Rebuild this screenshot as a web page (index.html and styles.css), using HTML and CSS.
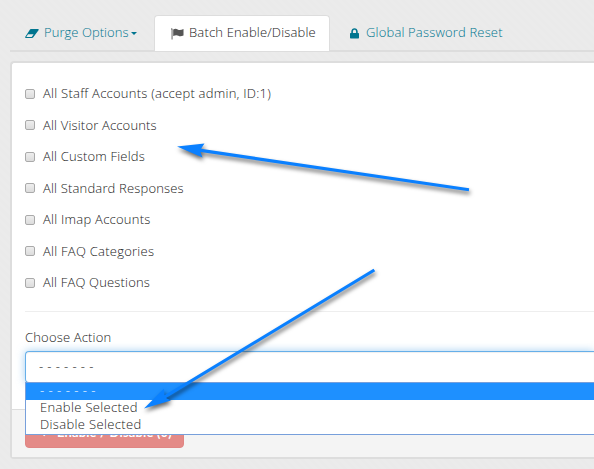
FILE: index.html
```html
<!DOCTYPE html>
<html lang="en">
<head>
<meta charset="utf-8">
<title>Batch Enable/Disable</title>
<link rel="stylesheet" href="styles.css">
</head>
<body>
<nav class="tabs">
  <a class="tab purge"><svg class="icon" width="14" height="9" viewBox="0 0 14 9"><path fill-rule="evenodd" d="M5.800 0H13q1 .1.7 1L8.300 8.200Q7.800 9 7 9H.8Q-.2 8.800.3 7.700L5 .6Q5.300 0 5.800 0ZM3 5.200 1.300 8H6.700L8.600 5.200Z"/></svg><span>Purge Options</span><i class="caret"></i></a>
  <a class="tab active"><svg class="icon" width="13" height="12" viewBox="0 0 13 12"><path d="M0 .8Q.7-.3 1.500.8V11.500H.600V1.800Q0 1.500 0 .8ZM2.200 1.500Q4.500.200 6.700 1.400T12.500 1V7.500Q9.500 9 7.400 7.800T2.200 8.100Z"/></svg><span>Batch Enable/Disable</span></a>
  <a class="tab global"><svg class="icon" width="9" height="11" viewBox="0 0 9 11"><path fill-rule="evenodd" d="M1.300 5V3.600C1.300-1 7.700-1 7.700 3.600V5H8.300Q9 5 9 5.700V9.800Q9 10.500 8.300 10.500H.7Q0 10.500 0 9.800V5.700Q0 5 .7 5ZM2.900 5H6.100V3.600C6.100 1.100 2.900 1.100 2.900 3.600Z"/></svg><span>Global Password Reset</span></a>
</nav>
<main class="panel">
  <div class="panel-body">
    <label class="row wide"><i class="box"></i><span>All Staff Accounts (accept admin, ID:1)</span></label>
    <label class="row"><i class="box"></i><span>All Visitor Accounts</span></label>
    <label class="row"><i class="box"></i><span>All Custom Fields</span></label>
    <label class="row"><i class="box"></i><span>All Standard Responses</span></label>
    <label class="row wide"><i class="box"></i><span>All Imap Accounts</span></label>
    <label class="row wide"><i class="box"></i><span>All FAQ Categories</span></label>
    <label class="row"><i class="box"></i><span>All FAQ Questions</span></label>
    <hr>
    <div class="caption">Choose Action</div>
    <div class="select">- - - - - - -
      <div class="menu">
        <div class="option chosen">- - - - - - -</div>
        <div class="option">Enable Selected</div>
        <div class="option">Disable Selected</div>
      </div>
    </div>
  </div>
  <div class="panel-footer">
    <button class="submit"><svg class="icon" width="11" height="10" viewBox="0 0 11 10"><path d="M0 5 1.800 3.200 4.200 5.600 9.200.6 11 2.400 4.200 9.200Z"/></svg><span>Enable / Disable (0)</span></button>
  </div>
</main>
<svg class="arrows" width="594" height="469" viewBox="0 0 594 469">
  <path d="M177 146.500 204.500 143.500 201 148.800 469.200 188.200 468.800 191.200 200.500 152 202.500 157.500Z"/>
  <path d="M144 408.500 164 388.500 164.500 395.300 373.500 268.800 375.200 271.300 166 398 171 400.500Z"/>
</svg>
</body>
</html>
```
FILE: styles.css
```css
* { box-sizing: border-box; }
body {
  margin: 0;
  width: 594px;
  height: 469px;
  overflow: hidden;
  padding: 15px 0 0 10px;
  background: repeating-linear-gradient(45deg, #ebebeb 0 3px, #eaeaea 3px 6px);
  font: 13px/18px "Open Sans", "Liberation Sans", sans-serif;
  font-weight: 300;
  letter-spacing: .17px;
  color: #222;
}
.icon { fill: currentColor; flex: none; }
.tabs {
  display: flex;
  height: 37px;
  border-bottom: 2px solid #ddd;
}
.tab {
  display: flex;
  align-items: center;
  height: 36px;
  color: #00758f;
  white-space: nowrap;
}
.tab span { padding-bottom: 2px; }
.purge { width: 144px; padding-left: 15px; letter-spacing: .05px; }
.purge .icon { margin-right: 5px; }
.caret {
  margin-left: 2px;
  border: 3.500px solid transparent;
  border-top-color: currentColor;
  border-bottom: 0;
}
.active {
  width: 176px;
  padding-left: 16px;
  background: #fff;
  border: 1px solid #ddd;
  border-bottom: 0;
  border-radius: 4px 4px 0 0;
  color: #222;
}
.active span { padding-bottom: 3px; }
.active .icon { margin-right: 5px; fill: #555; }
.global { padding-left: 20px; }
.global .icon { margin-right: 7px; }
.panel {
  height: 398px;
  margin-top: 9px;
  border: 2px solid #ddd;
  border-right: 0;
  border-radius: 4px 0 0 4px;
  background: #fff;
}
.panel-body { height: 346px; padding: 15px 0 0 13px; }
.row { display: flex; align-items: center; height: 31.500px; }
.row span { padding-bottom: 1px; }
.wide { letter-spacing: .25px; }
.box {
  width: 10px;
  height: 10px;
  margin-right: 8px;
  border: 1px solid #aaa;
  border-radius: 2px;
  background: linear-gradient(#eee, #dcdcdc);
}
hr { margin: 12.500px 0 0; border: 0; border-top: 1px solid #eee; }
.caption { margin-top: 16px; }
.select {
  position: relative;
  height: 32px;
  margin-top: 5px;
  padding: 5px 13px;
  border: 1px solid #66afe9;
  border-right: 0;
  border-radius: 4px 0 0 4px;
  background: #fff;
  box-shadow: inset 0 1px 1px #0001, 0 0 8px #66afe999;
  letter-spacing: .4px;
}
.menu {
  position: absolute;
  top: 30px;
  left: -1px;
  right: 0;
  height: 53px;
  border: 1px solid #779fdb;
  border-right: 0;
  background: #fff;
}
.option { height: 17px; padding-left: 14px; line-height: 15px; letter-spacing: .35px; }
.chosen { background: #1e90ff; color: #fff; letter-spacing: .5px; }
.panel-footer {
  height: 48px;
  padding: 8px 13px;
  border-top: 1px solid #ddd;
  background: #f4f4f4;
}
.submit {
  display: flex;
  align-items: center;
  width: 159px;
  height: 30px;
  padding: 0 0 2px 14px;
  border: 1px solid #e08583;
  border-radius: 4px;
  background: #e48a87;
  color: #fff;
  font: bold 13px/18px Lato, "Liberation Sans", sans-serif;
  letter-spacing: .15px;
}
.submit .icon { margin-right: 6px; }
.arrows {
  position: absolute;
  top: 0;
  left: 0;
  fill: #0a80ff;
  filter: drop-shadow(1px 3px 2px #0009);
}
```
